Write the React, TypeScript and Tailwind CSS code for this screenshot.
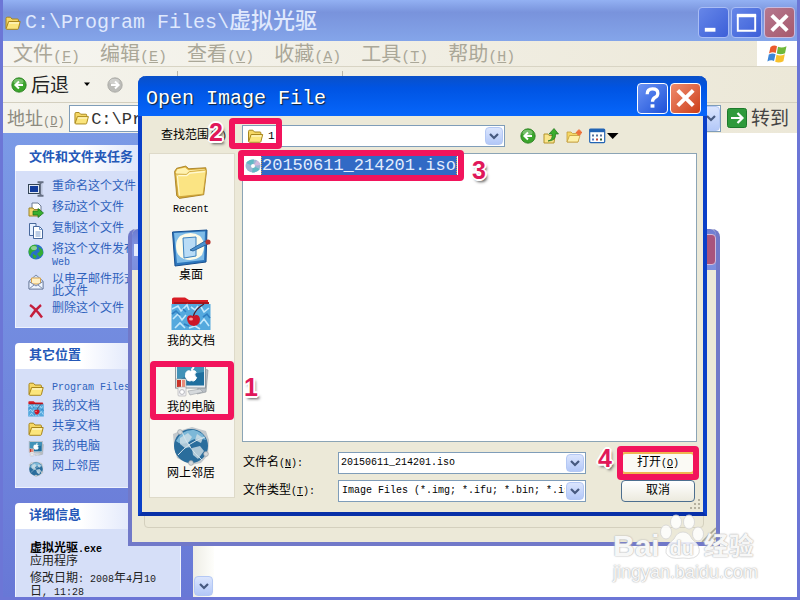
import type { ReactNode } from "react"

const FolderIcon = ({ className = "w-4 h-4" }) => (
  <svg viewBox="0 0 16 16" className={className}>
    <path d="M1 13.5V3.5Q1 2.2 2.2 2.2H5.4L7 4H12.6Q13.4 4 13.4 5V6.5" fill="#f5d765" stroke="#a8861c" />
    <path d="M1.2 13.6L3.6 6.5H15.2L13.4 13.6Q13.2 14.3 12.4 14.3H2Q1.2 14.3 1.2 13.6Z" fill="#fbe57c" stroke="#a8861c" />
    <path d="M4 8H14" stroke="#fffbe0" />
  </svg>
)

const CircleArrow = ({ color = "#3ba52c", edge = "#237a1b", flip = false, className = "w-4 h-4" }) => (
  <svg viewBox="0 0 16 16" className={className}>
    <circle cx="8" cy="8" r="7.2" fill={color} stroke={edge} strokeWidth="0.8" />
    <ellipse cx="7.5" cy="4.5" rx="5" ry="2.8" fill="#fff" opacity="0.3" />
    <path
      d={flip ? "M4 8H11M8 4.5L11.6 8L8 11.5" : "M12 8H5M8 4.5L4.4 8L8 11.5"}
      fill="none"
      stroke="#fff"
      strokeWidth="2"
    />
  </svg>
)

const Chevron = ({ className = "" }) => (
  <span
    className={`flex items-center justify-center rounded-sm border border-[#b4c8f4] bg-linear-to-b from-[#dbe5fd] to-[#b3c8f8] ${className}`}
  >
    <svg viewBox="0 0 10 8" className="h-2 w-2.5">
      <path d="M1 2L5 6L9 2" fill="none" stroke="#46597f" strokeWidth="2.2" />
    </svg>
  </span>
)

const RenameIcon = () => (
  <svg viewBox="0 0 16 16" className="h-4 w-4">
    <rect x="0.5" y="3.5" width="11" height="9" fill="#dfe7f5" stroke="#345" />
    <rect x="2" y="5" width="8" height="6" fill="#123c9c" />
    <path d="M9.5 1.2H15.5M12.5 1V15M9.5 14.8H15.5" stroke="#667084" strokeWidth="2" />
    <path d="M13.8 3V13" stroke="#bcc6dd" strokeWidth="1.6" />
  </svg>
)

const MoveIcon = () => (
  <svg viewBox="0 0 16 16" className="h-4 w-4">
    <path d="M4 1H10L13 4V10H4Z" fill="#fff" stroke="#6d7b94" />
    <path d="M1 14V6H5L6 7.5H12V14Z" fill="#f3d66b" stroke="#9c8429" />
    <path d="M5 9H10V6.5L15.5 11L10 15.5V13H5Z" fill="#38b02e" stroke="#176b18" strokeWidth="0.7" />
  </svg>
)

const CopyIcon = () => (
  <svg viewBox="0 0 16 16" className="h-4 w-4">
    <path d="M1.5 0.5H8V12.5H1.5Z" fill="#e6f0ff" stroke="#48689c" />
    <path d="M5.5 3.5H11.5L14.5 6.5V15.5H5.5Z" fill="#fff" stroke="#48689c" />
    <path d="M11.5 3.5V6.5H14.5M7.5 9H12.5M7.5 11H12.5M7.5 13H12.5" stroke="#7d9ccc" fill="none" />
  </svg>
)

const GlobeIcon = () => (
  <svg viewBox="0 0 16 16" className="h-4 w-4">
    <circle cx="8" cy="8" r="7.5" fill="#2870c8" />
    <path d="M2 3Q6-1 9 2L8 6L4 8L2 12Q-1 7 2 3M10 3Q16 5 15 10L12 13L9 10L12 7ZM5 10L9 12L7 15Q4 14 5 10Z" fill="#34ac35" />
    <ellipse cx="6" cy="4" rx="3" ry="2" fill="#fff" opacity="0.45" />
  </svg>
)

const MailIcon = () => (
  <svg viewBox="0 0 16 16" className="h-4 w-4">
    <path d="M1 7L8 1L15 7V15H1Z" fill="#cfe0f8" stroke="#7d8cab" />
    <path d="M3.5 4H12.5V10H3.5Z" fill="#fff0c4" stroke="#d9a44c" />
    <path d="M1 7.5L8 12L15 7.5V15H1Z" fill="#eef5ff" stroke="#7d8cab" />
    <path d="M1 15L6 11M15 15L10 11" stroke="#7d8cab" />
  </svg>
)

const DeleteIcon = () => (
  <svg viewBox="0 0 16 16" className="h-4 w-4">
    <path d="M2 2Q8 6 14 14.5M13 2Q7 7 2.5 14" fill="none" stroke="#c41e3c" strokeWidth="2.4" />
  </svg>
)

const DocumentsIcon = ({ className = "w-4 h-4" }) => (
  <svg viewBox="0 0 40 34" preserveAspectRatio="none" className={className}>
    <path d="M1 7V2Q1 0.5 3 0.5H14L18 3H37V8Z" fill="#d81c24" />
    <path d="M3 5H38V8H3Z" fill="#a9141c" />
    <rect x="0.5" y="7" width="39" height="26" fill="#54a9de" />
    <path
      d="M1 12L7 9L10 14L16 8L18 13M2 22L7 17L11 23L15 18M4 31L9 26L14 31M30 10L33 15L38 11M29 27L33 22L38 29M18 31L24 29L29 32M20 10L24 13L27 9"
      fill="none"
      stroke="#c2e8fc"
      strokeWidth="1.6"
    />
    <path d="M1 17L5 14L9 18M32 20L36 17L39 21M13 27L18 29M12 12L15 15" stroke="#2f7fc2" fill="none" strokeWidth="1.6" />
    <path d="M22 20Q24 12 33 7" stroke="#5b1820" fill="none" strokeWidth="1.2" />
    <path d="M16 21Q17 17 22 19Q28 16 29 22Q29 28 23 29Q16 28 16 21Z" fill="#cc1627" />
    <ellipse cx="20" cy="22" rx="2" ry="1.5" fill="#ff9a9a" />
  </svg>
)

const ComputerIcon = ({ className = "w-4 h-4" }) => (
  <svg viewBox="0 0 36 34" className={className}>
    <path d="M28 5L35 7L33 29L24 31Z" fill="#b9bfc5" stroke="#888f96" strokeWidth="0.6" />
    <rect x="2.5" y="0" width="30" height="25" fill="#e9edf0" stroke="#8e979e" />
    <rect x="4" y="1.5" width="27" height="21" fill="#1f6f9e" />
    <path d="M4 1.5H31V9Q16 11 4 18Z" fill="#4292b8" />
    <path
      d="M18.5 7Q18.5 4.5 21 3.8Q21.2 6.5 18.5 7M17.5 8.2Q19 7.4 20.5 7.6Q22.5 7.8 23.2 9.2Q20.8 10.8 22.2 13.2Q22.8 14 23.7 14.4Q22.4 17.8 20.5 18Q18.2 17.2 16.6 18Q14 18.4 12.6 14Q12 8.2 15.6 7.7Q16.6 7.6 17.5 8.2Z"
      fill="#fff"
      stroke="#fff"
    />
    <rect x="3" y="16" width="10" height="9" fill="#f3efe9" stroke="#9d9d9d" strokeWidth="0.6" />
    <rect x="4" y="17" width="4" height="7" fill="#c93328" />
    <rect x="9" y="17" width="3" height="7" fill="#e98c7a" />
    <rect x="5" y="24" width="8" height="9" rx="1" fill="#f1f1f3" stroke="#a9a9ad" strokeWidth="0.6" />
    <circle cx="9" cy="29" r="2.4" fill="#fff" stroke="#b6b6bc" />
    <path d="M15 28L27 26L30 29L17 32Z" fill="#d5d9dc" stroke="#9ba0a4" strokeWidth="0.6" />
  </svg>
)

const NetworkIcon = ({ className = "w-4 h-4" }) => (
  <svg viewBox="0 0 38 40" className={className}>
    <path d="M1 8L10 4L20 1L34 5L37 14L36 29L29 37L19 39L5 32L2 20Z" fill="#c3c9cd" />
    <circle cx="19" cy="20" r="17" fill="#2a6d9c" />
    <path d="M4 15Q10 3 22 4Q31 6 34 14Q24 10 17 16Q9 20 4 15Z" fill="#7db8d8" />
    <path d="M8 12L16 7L20 11L16 17L19 21L13 22L8 18ZM20 22L28 20L32 25L26 33L21 29ZM25 8L31 12L29 17L23 14Z" fill="#cfdfe6" opacity="0.8" />
    <path d="M6 29Q17 16 33 11M10 6Q16 22 30 34" stroke="#d5e5ed" strokeWidth="1" fill="none" />
    <circle cx="8" cy="6" r="2.4" fill="#d3d8db" stroke="#90999f" strokeWidth="0.6" />
    <circle cx="34" cy="28" r="2.4" fill="#d3d8db" stroke="#90999f" strokeWidth="0.6" />
    <circle cx="19" cy="37" r="2.4" fill="#d3d8db" stroke="#90999f" strokeWidth="0.6" />
  </svg>
)

const RecentIcon = () => (
  <svg viewBox="0 0 34 34" className="h-9 w-9">
    <path d="M3.5 30L1.5 7L3.5 4L12 2L15 4.5L31 3.5L31.5 8L29 29L6 32.5Z" fill="#dcae39" stroke="#a27b20" strokeWidth="0.8" />
    <path d="M2.5 8L4 5L11.5 3.2L14.5 6L30 4.8L30.5 9L4 11Z" fill="#fff2b0" />
    <path d="M5 31L2.5 9.5L12.5 9.8L15.5 7.2L31.5 5.5L28.5 28.5Z" fill="#fbe483" stroke="#c49a32" strokeWidth="0.7" />
    <path d="M6 29.5L4.2 11.5M5 11L13 11L16 8.6L30 7.2" stroke="#fff9d4" strokeWidth="1" fill="none" />
  </svg>
)

const DesktopIcon = () => (
  <svg viewBox="0 0 40 38" className="h-10 w-10">
    <path d="M1.5 3L36 1L35 33L4 37Z" fill="#2d77bd" stroke="#174f8f" />
    <path d="M3 4L34 2.5L33 31L6 34Z" fill="#7fbce8" />
    <path d="M9 7Q20 1 29 7Q36 15 31 26Q24 33 13 30Q5 27 5 17Q5 11 9 7Z" fill="#fdfbe8" />
    <path d="M12 9L25 8V27L13 29Z" fill="#b9dcf6" stroke="#3b82bf" />
    <path d="M19 21L34 12L37 15L22 22Z" fill="#4a90ce" stroke="#1d5790" strokeWidth="0.8" />
    <circle cx="37" cy="13" r="2.6" fill="#b43631" />
  </svg>
)

const UpIcon = () => (
  <svg viewBox="0 0 16 16" className="h-4 w-4">
    <path d="M1 15V6H5L6 7.5H12L11 15Z" fill="#f9e58b" stroke="#b4932c" />
    <path d="M5 13Q10 12 9 6H6L11 0.5L15.5 6H12.5Q13 13 5 13Z" fill="#3cae2d" stroke="#1c711b" strokeWidth="0.7" />
  </svg>
)

const NewFolderIcon = () => (
  <svg viewBox="0 0 16 16" className="h-4 w-4">
    <path d="M1 14V4H5L6.5 5.5H12V14Z" fill="#f5d765" stroke="#c49d3a" strokeWidth="0.8" />
    <path d="M1 14L3.5 7.5H14L12 14Z" fill="#fdf0a8" stroke="#c49d3a" strokeWidth="0.8" />
    <circle cx="13" cy="4.5" r="2.6" fill="#ee7a45" />
    <path d="M13 1.2V7.8M9.8 4.5H16" stroke="#ec7038" strokeWidth="1" />
  </svg>
)

const ViewsIcon = () => (
  <svg viewBox="0 0 30 16" className="h-4 w-[30px]">
    <rect x="0.7" y="1" width="15" height="13.6" rx="1" fill="#fff" stroke="#2264b4" strokeWidth="1.2" />
    <rect x="0.7" y="1" width="15" height="3.2" fill="#2264b4" />
    <path d="M3 7.5H5M7 7.5H9M11 7.5H13" stroke="#58739c" strokeWidth="2" />
    <path d="M3 11.5H5" stroke="#5878c0" strokeWidth="2" />
    <path d="M7 11.5H9" stroke="#c4463a" strokeWidth="2" />
    <path d="M11 11.5H13" stroke="#355d37" strokeWidth="2" />
    <path d="M18 5H29.5L23.7 11Z" fill="#000" />
  </svg>
)

const WindowsFlag = () => (
  <svg viewBox="0 0 20 20" className="h-5 w-5">
    <path d="M3.5 3Q7 0.5 10 2.2L8.7 9Q5.5 7.4 2 9.5Z" fill="#ea5a2c" />
    <path d="M11 2.8Q15 4.5 19.5 2.2L18 9.2Q14 11.2 9.8 9.6Z" fill="#6fb83a" />
    <path d="M1.8 10.5Q5.5 8.6 8.5 10.2L7 17Q4 15.4 0.4 17.5Z" fill="#3c86d8" />
    <path d="M9.5 10.8Q13.5 12.4 17.8 10.3L16.4 17.2Q12 19.3 8.2 17.7Z" fill="#f8c12c" />
  </svg>
)

const tasks: { icon: ReactNode; label: ReactNode }[] = [
  { icon: <RenameIcon />, label: "重命名这个文件" },
  { icon: <MoveIcon />, label: "移动这个文件" },
  { icon: <CopyIcon />, label: "复制这个文件" },
  {
    icon: <GlobeIcon />,
    label: (
      <>
        将这个文件发布到
        <br />
        <span className="text-[10px]">Web</span>
      </>
    ),
  },
  {
    icon: <MailIcon />,
    label: (
      <>
        以电子邮件形式发送
        <br />
        此文件
      </>
    ),
  },
  { icon: <DeleteIcon />, label: "删除这个文件" },
]

const otherPlaces: { icon: ReactNode; label: ReactNode }[] = [
  { icon: <FolderIcon />, label: <span className="text-[10px]">Program Files</span> },
  { icon: <DocumentsIcon />, label: "我的文档" },
  { icon: <FolderIcon />, label: "共享文档" },
  { icon: <ComputerIcon />, label: "我的电脑" },
  { icon: <NetworkIcon />, label: "网上邻居" },
]

const menus = [
  ["文件", "F"],
  ["编辑", "E"],
  ["查看", "V"],
  ["收藏", "A"],
  ["工具", "T"],
  ["帮助", "H"],
]

const places = [
  { icon: <RecentIcon />, label: "Recent", small: true },
  { icon: <DesktopIcon />, label: "桌面" },
  { icon: <DocumentsIcon className="h-[34px] w-10" />, label: "我的文档" },
  { icon: <ComputerIcon className="h-9 w-9" />, label: "我的电脑" },
  { icon: <NetworkIcon className="h-10 w-10" />, label: "网上邻居" },
]

function TaskPanel({ title, children }: { title: string; children: ReactNode }) {
  return (
    <section>
      <h2 className="h-[26px] rounded-t bg-linear-to-r from-white from-40% to-[#c6d3f7] pl-3.5 text-[13px] leading-[26px] font-bold text-[#2458b8]">
        {title}
      </h2>
      <div className="border border-t-0 border-[#eef2fd] bg-[#d6dff8]">{children}</div>
    </section>
  )
}

function LinkList({ items, className }: { items: { icon: ReactNode; label: ReactNode }[]; className: string }) {
  return (
    <ul className={`flex flex-col pl-3 ${className}`}>
      {items.map((item, i) => (
        <li key={i}>
          <a href="#" className="flex gap-2 text-xs leading-3 whitespace-nowrap text-[#2f62bd]">
            <span className="shrink-0">{item.icon}</span>
            <span>{item.label}</span>
          </a>
        </li>
      ))}
    </ul>
  )
}

function CaptionButton({ label, className, children }: { label: string; className: string; children: ReactNode }) {
  return (
    <button aria-label={label} className={`flex h-[31px] w-[31px] items-center justify-center rounded border ${className}`}>
      <svg viewBox="0 0 30 30" className="h-[30px] w-[30px]" fill="none" stroke="#fff">
        {children}
      </svg>
    </button>
  )
}

function ExplorerWindow() {
  return (
    <main className="flex h-screen flex-col border-x-3 border-b-3 border-[#6c76d6] bg-[#efecdf]">
      <header className="flex h-[41px] shrink-0 items-center bg-linear-to-b from-[#93b1f3] via-[#7993dc] via-30% to-[#84a5ea] px-0.5 pt-1">
        <FolderIcon />
        <h1 className="ml-1 flex-1 text-[20px] font-medium text-[#dfe8fd]">
          C:\Program Files\<span className="text-[22px]">虚拟光驱</span>
        </h1>
        <div className="flex gap-0.5">
          <CaptionButton label="最小化" className="border-[#a9bdf5] bg-linear-to-br from-[#6686e8] to-[#3d5fd8]">
            <path d="M6 22H17" strokeWidth="4" />
          </CaptionButton>
          <CaptionButton label="最大化" className="border-[#a9bdf5] bg-linear-to-br from-[#6686e8] to-[#3d5fd8]">
            <path d="M6 8H24V23H6Z" strokeWidth="2" />
            <path d="M5 7H25" strokeWidth="3" />
          </CaptionButton>
          <CaptionButton label="关闭" className="border-[#c9bbdf] bg-linear-to-br from-[#b5788f] to-[#a7596d]">
            <path d="M7 7L23 23M23 7L7 23" strokeWidth="4" />
          </CaptionButton>
        </div>
      </header>

      <nav className="flex h-[26px] shrink-0 items-center gap-5 border-b border-[#d8d4c4] bg-linear-to-r from-[#f6f5f0] to-[#ece8d8] pl-2.5 text-[#aaa798]">
        {menus.map(([label, key]) => (
          <button key={key} className="pt-1.5 text-[20px] leading-6">
            {label}
            <span className="text-[15px]">
              (<u>{key}</u>)
            </span>
          </button>
        ))}
        <span className="ml-auto flex h-full w-10 items-center justify-center bg-white">
          <WindowsFlag />
        </span>
      </nav>

      <div className="flex h-9 shrink-0 items-center border-b border-[#d3cfbf] bg-linear-to-r from-[#f4f3ec] to-[#ece8d8] pl-2">
        <button className="flex items-center gap-1 text-[19px] text-[#222]">
          <CircleArrow />
          <span className="pt-1.5">后退</span>
        </button>
        <svg viewBox="0 0 8 5" className="ml-3.5 h-[5px] w-2">
          <path d="M1 0.5H7L4 4Z" fill="#000" />
        </svg>
        <button aria-label="前进" className="ml-4">
          <CircleArrow color="#bcbcb8" edge="#a4a4a0" flip />
        </button>
        <span className="ml-[54px] h-7 w-px bg-[#b9b6a8]" />
        <span className="ml-[164px] h-7 w-px bg-[#b9b6a8]" />
      </div>

      <form className="flex h-[30px] shrink-0 items-center bg-linear-to-r from-[#f4f3ec] to-[#ece8d8] pr-2 pl-1">
        <label htmlFor="address" className="w-[62px] pt-1 text-[18px] whitespace-nowrap text-[#8d8b80]">
          地址
          <span className="text-xs">
            (<u>D</u>)
          </span>
        </label>
        <div className="flex h-[27px] flex-1 items-center border border-[#7f9db9] bg-white pl-1">
          <FolderIcon />
          <input
            id="address"
            defaultValue="C:\Program Files\虚拟光驱"
            className="ml-0.5 w-full pt-1 text-[17px] text-[#333] outline-none"
          />
          <Chevron className="h-full w-[18px]" />
        </div>
        <button type="button" className="ml-1.5 flex items-center gap-1 text-[19px] text-[#444]">
          <svg viewBox="0 0 20 20" className="h-5 w-5">
            <rect x="0.5" y="0.5" width="19" height="19" rx="2" fill="#2f9a3b" stroke="#1d7a2b" />
            <path d="M4 10H15M10.5 5L15.5 10L10.5 15" stroke="#fff" strokeWidth="2.2" fill="none" />
          </svg>
          <span className="pt-1">转到</span>
        </button>
      </form>

      <div className="flex min-h-0 flex-1 bg-white">
        <aside className="flex w-[190px] shrink-0 flex-col gap-[15px] overflow-hidden bg-linear-to-b from-[#7b9ae6] to-[#6878d6] px-3 pt-3">
          <TaskPanel title="文件和文件夹任务">
            <LinkList items={tasks} className="gap-[5px] pt-2.5 pb-2" />
          </TaskPanel>
          <TaskPanel title="其它位置">
            <LinkList items={otherPlaces} className="gap-1 pt-3 pb-2.5" />
          </TaskPanel>
          <TaskPanel title="详细信息">
            <div className="px-3.5 pt-3.5 pb-6 text-xs leading-3 text-[#222]">
              <p className="font-bold text-black">
                虚拟光驱<span className="text-[10px]">.exe</span>
              </p>
              <p>应用程序</p>
              <p className="mt-[5px]">
                修改日期<span className="text-[10px]">: 2008</span>年<span className="text-[10px]">4</span>月
                <span className="text-[10px]">10</span>日<span className="text-[10px]">, 11:28</span>
              </p>
            </div>
          </TaskPanel>
        </aside>
        <div className="flex w-[21px] flex-col justify-end bg-linear-to-r from-[#eeede5] to-[#fefefb] p-px">
          <button aria-label="向下滚动">
            <Chevron className="h-5 w-full" />
          </button>
        </div>
      </div>
    </main>
  )
}

function BackWindow() {
  return (
    <section className="absolute top-[229px] left-[128px] flex h-[317px] w-[592px] flex-col rounded-t-lg border-4 border-t-0 border-[#7179c9] bg-[#ece9d8]">
      <header className="flex h-[41px] items-center justify-between rounded-t-md bg-linear-to-b from-[#6d7bd0] via-[#8296e4] to-[#7c8edd]">
        <span className="ml-0.5 h-3 w-4 bg-[#e5ebfc]" />
        <button aria-label="关闭" className="h-[31px] w-[31px] rounded border border-[#d2b9d8] bg-[#a9547c] text-xl leading-none font-bold text-white">
          ×
        </button>
      </header>
      <div className="m-3 mt-6 mb-3.5 flex-1 rounded-sm border border-[#d4d0be]" />
      <svg viewBox="0 0 16 16" className="absolute right-0 bottom-0 h-4 w-4" stroke="#aaa794" strokeWidth="1.6">
        <path d="M2 16L16 2M7 16L16 7M12 16L16 12" />
      </svg>
    </section>
  )
}

function OpenDialog() {
  return (
    <section
      role="dialog"
      aria-labelledby="dialog-title"
      className="absolute top-[76px] left-[138px] flex h-[440px] w-[569px] flex-col rounded-t-lg border-4 border-t-0 border-[#0a3fc8] border-b-[#0830a8] bg-[#ece9d8]"
    >
      <header className="-mx-1 flex h-10 shrink-0 items-center rounded-t-lg bg-linear-to-b from-[#0a50c8] via-[#0054e3] via-30% to-[#0766fb] pr-1.5 pl-2">
        <h2 id="dialog-title" className="flex-1 pt-1.5 text-[20px] font-medium text-white [text-shadow:1px_1px_1px_#123]">
          Open Image File
        </h2>
        <div className="flex gap-0.5 pt-1">
          <CaptionButton label="帮助" className="border-white bg-linear-to-br from-[#6b93f4] to-[#1d4fd8]">
            <path d="M9.5 11Q9.5 5.5 15 5.5Q20.5 5.5 20.5 10Q20.5 13 17.5 14.5Q15 16 15 19" strokeWidth="3.4" />
            <path d="M15 21.5V25" strokeWidth="4" />
          </CaptionButton>
          <CaptionButton label="关闭" className="border-white bg-linear-to-br from-[#ef8b6c] to-[#cc3d14]">
            <path d="M7 7L23 23M23 7L7 23" strokeWidth="4" />
          </CaptionButton>
        </div>
      </header>

      <form className="flex min-h-0 flex-1 flex-col pt-[9px] pr-1.5 pb-2.5 pl-[7px] text-xs text-black">
        <div className="flex h-[22px] shrink-0 items-center">
          <label htmlFor="look-in" className="w-[93px] pl-3">
            查找范围
            <span className="text-[10px]">
              (<u>I</u>):
            </span>
          </label>
          <div className="relative h-full w-[263px]">
            <select
              id="look-in"
              className="h-full w-full appearance-none border border-[#7f9db9] bg-white pl-[25px] text-[11px] outline-none"
            >
              <option>1</option>
            </select>
            <FolderIcon className="pointer-events-none absolute top-[3px] left-[5px] h-4 w-[17px]" />
            <Chevron className="pointer-events-none absolute top-0.5 right-0.5 h-[18px] w-[18px]" />
          </div>
          <div className="ml-[15px] flex gap-[7px]">
            <button type="button" aria-label="后退">
              <CircleArrow />
            </button>
            <button type="button" aria-label="向上一级">
              <UpIcon />
            </button>
            <button type="button" aria-label="新建文件夹">
              <NewFolderIcon />
            </button>
            <button type="button" aria-label="查看菜单">
              <ViewsIcon />
            </button>
          </div>
        </div>

        <div className="mt-1.5 flex min-h-0 flex-1 gap-[7px]">
          <div className="mb-1 flex w-[86px] shrink-0 flex-col gap-2.5 border border-[#dedac9] bg-[#f8f7f1] pt-2 pr-0.5">
            {places.map((place) => (
              <button type="button" key={place.label} className="flex flex-col items-center">
                <span className="flex h-10 items-center">{place.icon}</span>
                <span className={place.small ? "text-[10px] leading-4" : "text-xs leading-4"}>{place.label}</span>
              </button>
            ))}
          </div>

          <div className="flex min-w-0 flex-1 flex-col">
            <div className="flex-1 border border-[#8ba4b5] bg-white">
              <button type="button" className="flex h-[23px] items-center pl-0.5">
                <svg viewBox="0 0 16 16" className="h-4 w-4">
                  <ellipse cx="8" cy="8" rx="7.5" ry="6.5" fill="#9cb8d4" />
                  <path d="M8 8L1 5Q4 1 9 1.5ZM8 8L15 11Q12 15 7 14.5Z" fill="#62b9c4" />
                  <path d="M8 8L12 2.5Q15 4 15.5 7Z" fill="#d2b8dc" />
                  <circle cx="8" cy="8" r="2" fill="#fff" />
                </svg>
                <span className="border border-dotted border-[#d4a050] bg-[#316ac5] text-[17px] leading-[19px] text-[#e2ecfd]">
                  20150611_214201.iso
                </span>
              </button>
            </div>

            <div className="mt-2.5 flex gap-[35px] pr-0.5">
              <div className="flex min-w-0 flex-1 flex-col gap-1.5">
                <div className="flex h-[22px] items-center">
                  <label htmlFor="file-name" className="w-24 shrink-0 pl-px">
                    文件名
                    <span className="text-[10px]">
                      (<u>N</u>):
                    </span>
                  </label>
                  <div className="flex h-full min-w-0 flex-1 items-center border border-[#7f9db9] bg-white p-px">
                    <input
                      id="file-name"
                      defaultValue="20150611_214201.iso"
                      className="min-w-0 flex-1 pl-px text-[10px] outline-none"
                    />
                    <button type="button" aria-label="历史文件名">
                      <Chevron className="h-[18px] w-[18px]" />
                    </button>
                  </div>
                </div>
                <div className="flex h-[22px] items-center">
                  <label htmlFor="file-type" className="w-24 shrink-0 pl-px">
                    文件类型
                    <span className="text-[10px]">
                      (<u>T</u>):
                    </span>
                  </label>
                  <div className="relative h-full min-w-0 flex-1">
                    <select
                      id="file-type"
                      className="h-full w-full appearance-none border border-[#7f9db9] bg-white pr-5 pl-[3px] text-[10px] outline-none"
                    >
                      <option>Image Files (*.img; *.ifu; *.bin; *.iso)</option>
                    </select>
                    <Chevron className="pointer-events-none absolute top-0.5 right-0.5 h-[18px] w-[18px]" />
                  </div>
                </div>
              </div>
              <div className="flex w-[74px] flex-col gap-1.5">
                <button type="button" className="h-[22px] rounded-sm border-2 border-[#efb650] bg-[#fbfaf5]">
                  打开
                  <span className="text-[10px]">
                    (<u>O</u>)
                  </span>
                </button>
                <button type="button" className="h-[22px] rounded-sm border border-[#4d6f8f] bg-linear-to-b from-white to-[#eceade]">
                  取消
                </button>
              </div>
            </div>
          </div>
        </div>
      </form>
      <svg viewBox="0 0 12 12" className="absolute right-0.5 bottom-0.5 h-3 w-3" fill="#b5b19f">
        <path d="M9 1h2v2h-2zM5 5h2v2h-2zM9 5h2v2h-2zM1 9h2v2h-2zM5 9h2v2h-2zM9 9h2v2h-2z" />
      </svg>
    </section>
  )
}

const marks = [
  { n: 1, box: "left-[150px] top-[361px] h-[59px] w-[84px]", num: "left-[244px] top-[373px]" },
  { n: 2, box: "left-[229px] top-[118px] h-[31px] w-[53px]", num: "left-[209px] top-[118px]" },
  { n: 3, box: "left-[238px] top-[150px] h-[31px] w-[226px]", num: "left-[472px] top-[156px]" },
  { n: 4, box: "left-[617px] top-[446px] h-[34px] w-[82px]", num: "left-[598px] top-[444px]" },
]

function Marks() {
  return (
    <div className="pointer-events-none">
      {marks.map((mark) => (
        <div key={mark.n}>
          <div className={`absolute rounded border-6 border-[#f2145c] ${mark.box}`} />
          <span
            className={`absolute font-['Liberation_Sans',sans-serif] text-[25px] leading-7 font-bold text-[#e0185a] [text-shadow:-2px_0_#fff,2px_0_#fff,0_-2px_#fff,0_2px_#fff,-1px_-1px_#fff,1px_1px_#fff,-1px_1px_#fff,1px_-1px_#fff,2px_3px_3px_#555] ${mark.num}`}
          >
            {mark.n}
          </span>
        </div>
      ))}
    </div>
  )
}

function Watermark() {
  return (
    <div className="pointer-events-none absolute top-[514px] left-[613px] font-['Liberation_Sans','Noto_Sans_CJK_SC',sans-serif] text-white/90 [text-shadow:0_0_1px_#aaa,0_0_2px_#bbb]">
      <div className="flex h-[46px] items-end font-bold">
        <span className="text-[30px] leading-7">Bai</span>
        <span className="relative flex h-[46px] w-[44px] items-end justify-center">
          <svg viewBox="0 0 44 46" className="absolute inset-0" fill="#fff" fillOpacity="0.85" stroke="#d4d4d4" strokeWidth="0.8">
            <ellipse cx="6" cy="18" rx="5.5" ry="7" />
            <ellipse cx="16" cy="8" rx="5.5" ry="7" />
            <ellipse cx="29" cy="8" rx="5.5" ry="7" />
            <ellipse cx="38" cy="20" rx="5.5" ry="7" />
            <path d="M23 18Q29 18 32 25Q41 32 39 39Q36 46 23 44Q9 46 6 39Q5 32 14 25Q17 18 23 18Z" />
          </svg>
          <span className="relative text-[20px] leading-6">du</span>
        </span>
        <span className="text-[25px] leading-7">经验</span>
      </div>
      <div className="text-[18px] leading-6">jingyan.baidu.com</div>
    </div>
  )
}

export default function App() {
  return (
    <div className="relative overflow-hidden font-['Liberation_Mono','Noto_Sans_CJK_SC',monospace]">
      <ExplorerWindow />
      <BackWindow />
      <OpenDialog />
      <Marks />
      <Watermark />
    </div>
  )
}
